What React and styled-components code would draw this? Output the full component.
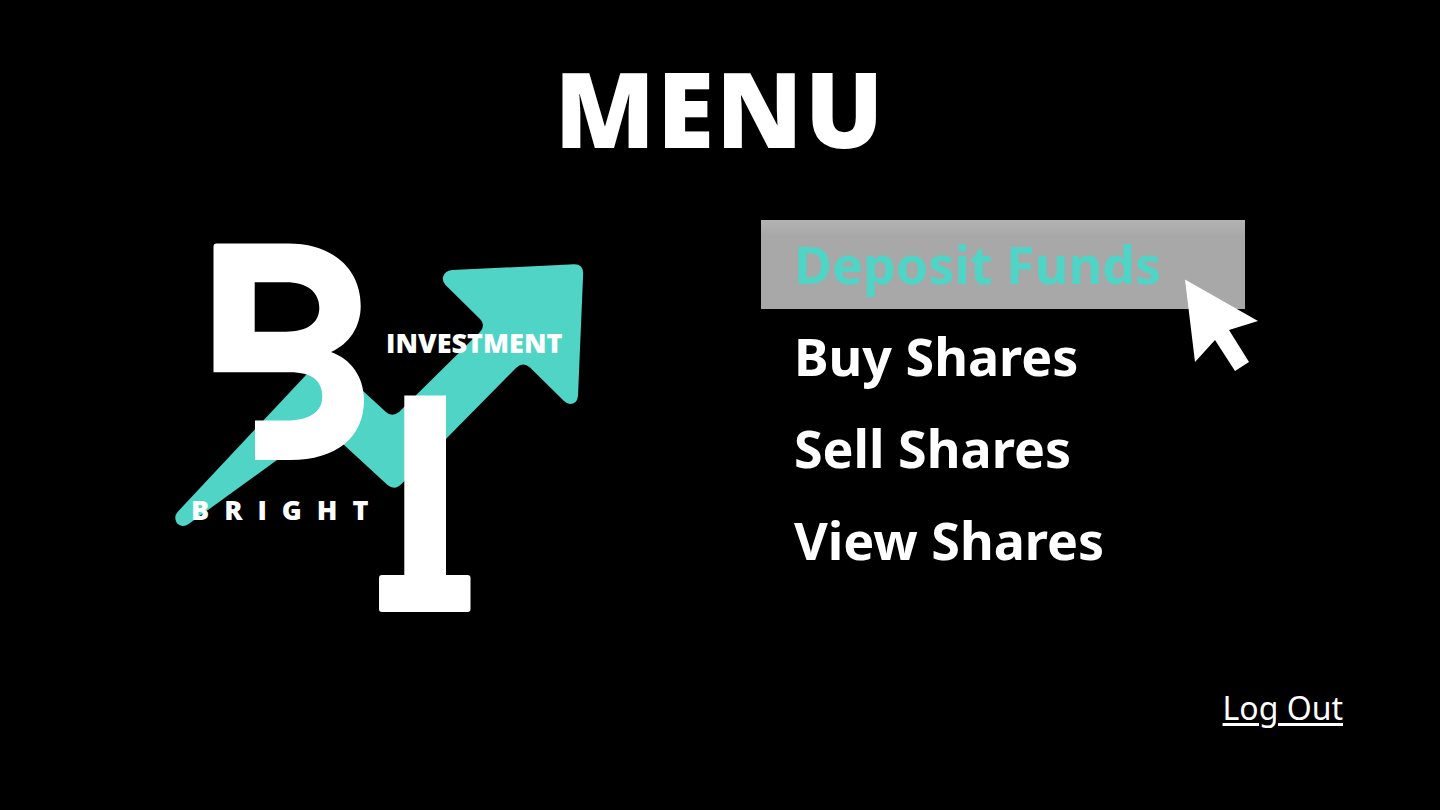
import React from "react";
import styled, { createGlobalStyle } from "styled-components";

const GlobalStyle = createGlobalStyle`
  * { box-sizing: border-box; }
  body {
    margin: 0;
    background: #000;
    color: #fff;
    font-family: "Noto Sans", "Open Sans", sans-serif;
  }
`;

const Page = styled.div`
  min-height: 100vh;
  display: flex;
  flex-direction: column;
`;

const Title = styled.h1`
  margin: 0;
  padding-top: 48px;
  text-align: center;
  font-family: "Open Sans", "Noto Sans", sans-serif;
  font-size: 104px;
  line-height: 120px;
  font-weight: 800;
  letter-spacing: 2px;
`;

const Content = styled.main`
  display: grid;
  grid-template-columns: 410px minmax(0, 484px);
  justify-content: space-between;
  align-items: start;
  padding: 52px 13.55% 0 12.12%;
`;

const Logo = styled.svg`
  display: block;
  width: 100%;
  margin-top: 20px;
`;

const LogoText = styled.text`
  fill: #fff;
  font-family: "Open Sans", "Noto Sans", sans-serif;
  font-size: 27px;
  font-weight: 800;
  letter-spacing: ${(p) => (p.$wide ? "15px" : "0")};
`;

const Menu = styled.nav`
  position: relative;
  display: flex;
  flex-direction: column;
  gap: 3px;
`;

const MenuLink = styled.a`
  height: 89px;
  padding: 0 33px;
  font-size: 52px;
  line-height: 88px;
  font-weight: 700;
  white-space: nowrap;
  text-decoration: none;
  color: ${(p) => (p.$active ? "#4fd4c6" : "#fff")};
  background: ${(p) =>
    p.$active ? "linear-gradient(#b3b3b3, #a8a8a8 16px)" : "none"};
`;

const Cursor = styled.svg`
  position: absolute;
  top: 59px;
  right: -14px;
  width: 74px;
  height: 93px;
  pointer-events: none;
`;

const Footer = styled.footer`
  margin-top: auto;
  padding: 0 97px 78px;
  text-align: right;
`;

const LogOut = styled.a`
  color: #fff;
  font-size: 32px;
  line-height: 48px;
  text-decoration: underline;
  text-decoration-thickness: 3px;
  text-underline-offset: 3px;
`;

const items = ["Deposit Funds", "Buy Shares", "Sell Shares", "View Shares"];

export default function App() {
  return (
    <>
      <GlobalStyle />
      <Page>
        <Title>MENU</Title>
        <Content>
          <Logo viewBox="175 240 410 376" role="img" aria-label="Bright Investment">
            <path
              fill="#4fd4c6"
              d="M177.500 512 L306 375 Q313 367 321 374 Q334 366 363 391 L386 412 Q392 417.500 399 412 L480 332 Q486 325 480 319 L445.500 285 Q442 281 443 277 Q445 270.500 452 270 L574 264.300 Q583 264 583.200 273 L578 396 Q577 404 570 404 Q567 404 564 401 L530 367.500 Q523 361.500 516.500 367.500 L402 483.500 Q395 491 387.500 485 L343 444 L320 425 L277 460 L190 523 C183 529 175 525 175.300 517 Q175.500 514.500 177.500 512 Z"
            />
            <path
              fill="#fff"
              fillRule="evenodd"
              d="M213.500 246.500 Q213.500 243.500 216.500 243.500 H288 C334 243.500 360.700 270 360.700 306 C360.700 327 349 344 331 352 C351 359 364 377 364 400 C364 437 337 460 290 460 H255 V420.500 H287 C309 420.500 322.300 412 322.300 396.500 C322.300 381 312 372.300 290 372.300 H213.500 Z M254.700 282.300 V331.700 H286 C307 331.700 319.300 323 319.300 308 C319.300 292 307 282.300 286 282.300 Z"
            />
            <path fill="#fff" d="M404.300 395.500 H446 V576 H404.300 Z" />
            <rect x="379" y="575" width="91.500" height="37" rx="3" fill="#fff" />
            <LogoText x="386" y="353">INVESTMENT</LogoText>
            <LogoText $wide x="191" y="520">BRIGHT</LogoText>
          </Logo>
          <Menu aria-label="Main menu">
            {items.map((item, i) => (
              <MenuLink key={item} href="#" $active={i === 0}>
                {item}
              </MenuLink>
            ))}
            <Cursor viewBox="0 0 74 93" aria-hidden="true">
              <path fill="#fff" d="M0 0.500 L73 42 L44 51 L64 83 L50 92 L30 61 L10 83 Z" />
            </Cursor>
          </Menu>
        </Content>
        <Footer>
          <LogOut href="#">Log Out</LogOut>
        </Footer>
      </Page>
    </>
  );
}
